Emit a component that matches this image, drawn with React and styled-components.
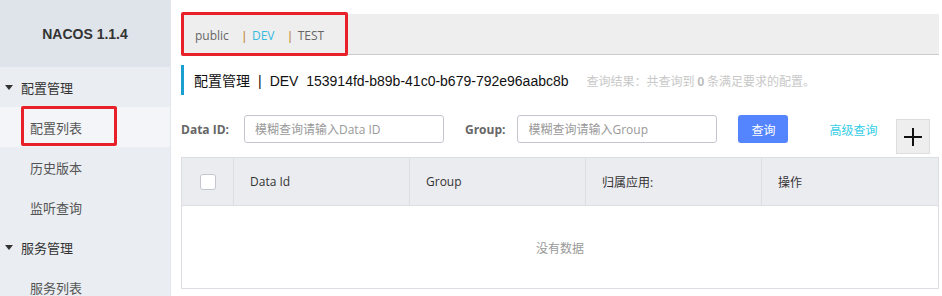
import React from "react";
import styled, { createGlobalStyle } from "styled-components";

const Global = createGlobalStyle`
  html, body { margin: 0; padding: 0; background: #fff; }
  body { font-family: "Liberation Sans", "Noto Sans CJK SC", sans-serif; font-size: 12px; color: #333; }
  * { box-sizing: border-box; }
`;

const Page = styled.div`
  display: flex;
  width: 942px;
  height: 296px;
  overflow: hidden;
`;

const Sidebar = styled.aside`
  width: 171px;
  flex: none;
  background: #eaedf1;
  border-right: 1px solid #e3e6eb;
`;

const Brand = styled.div`
  height: 67px;
  background: #dfe3ea;
  display: flex;
  align-items: center;
  justify-content: center;
  font-weight: bold;
  font-size: 14px;
  color: #333;
  font-family: "Liberation Sans", "Noto Sans CJK SC", sans-serif;
`;

const Menu = styled.ul`
  list-style: none;
  margin: 0;
  padding: 0;
`;

const MenuItem = styled.li`
  height: 40px;
  display: flex;
  align-items: center;
  padding-left: ${(p) => (p.$group ? 5 : 30)}px;
  background: ${(p) => (p.$active ? "#f4f5f8" : "transparent")};
  color: ${(p) => (p.$group ? "#333" : "#555")};
  font-size: 13px;
  font-family: "Noto Sans CJK SC", sans-serif;
  position: relative;
`;

const Caret = styled.span`
  width: 0;
  height: 0;
  border-left: 4px solid transparent;
  border-right: 4px solid transparent;
  border-top: 5px solid #333;
  margin-right: 8px;
`;

const Highlight = styled.span`
  position: absolute;
  left: 21px;
  top: -1px;
  width: 96px;
  height: 40px;
  border: 3px solid #e8202a;
  border-radius: 2px;
`;

const Main = styled.main`
  flex: 1;
  padding: 14px 3px 0 10px;
  display: flex;
  flex-direction: column;
`;

const TabBar = styled.div`
  height: 41px;
  background: #eeeeee;
  border-bottom: 1px solid #cccccc;
  display: flex;
  align-items: center;
  padding: 3px 0 0 14px;
  position: relative;
`;

const TabBox = styled.span`
  position: absolute;
  left: 0;
  top: -2px;
  width: 167px;
  height: 44px;
  border: 3px solid #e8202a;
  border-radius: 2px;
`;

const Tab = styled.span`
  font-size: 12px;
  color: ${(p) => (p.$active ? "#33bbe0" : "#666")};
  font-family: "Open Sans", "Noto Sans CJK SC", sans-serif;
`;

const Sep = styled.span`
  color: #c1862e;
  margin: 0 6px 0 14px;
  font-size: 12px;
`;

const TitleRow = styled.div`
  margin-top: 10px;
  height: 30px;
  display: flex;
  align-items: center;
  border-left: 3px solid #1a9fd0;
  padding-left: 10px;
`;

const Title = styled.span`
  font-size: 14px;
  color: #111;
  font-family: "Liberation Sans", "Noto Sans CJK SC", sans-serif;
  white-space: nowrap;
`;

const Pipe = styled.span`
  margin: 0 8px;
`;

const Summary = styled.span`
  margin-left: 18px;
  color: #c8c8c8;
  font-size: 12px;
  font-family: "Noto Sans CJK SC", sans-serif;
  white-space: nowrap;
  b { color: #bbb; }
`;

const FormRow = styled.div`
  margin-top: 20px;
  display: flex;
  align-items: flex-start;
  height: 42px;
`;

const Label = styled.label`
  font-weight: bold;
  color: #666;
  font-size: 12px;
  height: 28px;
  display: flex;
  align-items: center;
  font-family: "Open Sans", sans-serif;
  margin-right: ${(p) => p.$mr}px;
  margin-left: ${(p) => p.$ml || 0}px;
`;

const Input = styled.input`
  width: 200px;
  height: 28px;
  border: 1px solid #c4c6cf;
  border-radius: 3px;
  padding: 0 10px;
  font-size: 12px;
  font-family: "Open Sans", "Noto Sans CJK SC", sans-serif;
  outline: none;
  &::placeholder { color: #999; }
`;

const Button = styled.button`
  margin-left: 21px;
  width: 50px;
  height: 28px;
  border: none;
  border-radius: 3px;
  background: #5584ff;
  color: #fff;
  font-size: 12px;
  font-family: "Noto Sans CJK SC", sans-serif;
`;

const Link = styled.a`
  margin-left: 41px;
  height: 28px;
  display: flex;
  align-items: center;
  color: #33cde5;
  font-size: 12px;
  font-family: "Noto Sans CJK SC", sans-serif;
`;

const PlusBtn = styled.div`
  margin-left: 19px;
  margin-top: 4px;
  width: 34px;
  height: 35px;
  background: #eeeeee;
  border: 1px solid #dddddd;
  display: flex;
  align-items: center;
  justify-content: center;
`;

const Table = styled.div`
  width: 758px;
  border: 1px solid #dcdee3;
`;

const HeadRow = styled.div`
  display: grid;
  grid-template-columns: 51px 176px 176px 176px 1fr;
  height: 48px;
  background: #ebecf0;
  border-bottom: 1px solid #dcdee3;
`;

const HeadCell = styled.div`
  display: flex;
  align-items: center;
  justify-content: ${(p) => (p.$center ? "center" : "flex-start")};
  padding-left: ${(p) => (p.$center ? 0 : 16)}px;
  border-left: ${(p) => (p.$first ? "none" : "1px solid #dcdee3")};
  color: #333;
  font-size: 12px;
  font-family: "Open Sans", "Noto Sans CJK SC", sans-serif;
`;

const Check = styled.span`
  width: 16px;
  height: 16px;
  border: 1px solid #c4c6cf;
  border-radius: 3px;
  background: #fff;
`;

const Empty = styled.div`
  height: 82px;
  display: flex;
  align-items: center;
  justify-content: center;
  color: #999;
  font-size: 12px;
  font-family: "Noto Sans CJK SC", sans-serif;
`;

export default function App() {
  return (
    <>
      <Global />
      <Page>
        <Sidebar>
          <Brand>NACOS 1.1.4</Brand>
          <Menu>
            <MenuItem $group><Caret />配置管理</MenuItem>
            <MenuItem $active>配置列表<Highlight /></MenuItem>
            <MenuItem>历史版本</MenuItem>
            <MenuItem>监听查询</MenuItem>
            <MenuItem $group><Caret />服务管理</MenuItem>
            <MenuItem>服务列表</MenuItem>
          </Menu>
        </Sidebar>
        <Main>
          <TabBar>
            <TabBox />
            <Tab>public</Tab>
            <Sep>|</Sep>
            <Tab $active>DEV</Tab>
            <Sep>|</Sep>
            <Tab>TEST</Tab>
          </TabBar>
          <TitleRow>
            <Title>配置管理<Pipe>|</Pipe>DEV&nbsp;&nbsp;153914fd-b89b-41c0-b679-792e96aabc8b</Title>
            <Summary>查询结果：共查询到 <b>0</b> 条满足要求的配置。</Summary>
          </TitleRow>
          <FormRow>
            <Label $mr={15}>Data ID:</Label>
            <Input placeholder="模糊查询请输入Data ID" />
            <Label $ml={21} $mr={12}>Group:</Label>
            <Input placeholder="模糊查询请输入Group" />
            <Button>查询</Button>
            <Link>高级查询</Link>
            <PlusBtn>
              <svg width="20" height="20" viewBox="0 0 20 20">
                <path d="M10 1v18M1 10h18" stroke="#111" strokeWidth="2" />
              </svg>
            </PlusBtn>
          </FormRow>
          <Table>
            <HeadRow>
              <HeadCell $first $center><Check /></HeadCell>
              <HeadCell>Data Id</HeadCell>
              <HeadCell>Group</HeadCell>
              <HeadCell>归属应用:</HeadCell>
              <HeadCell>操作</HeadCell>
            </HeadRow>
            <Empty>没有数据</Empty>
          </Table>
        </Main>
      </Page>
    </>
  );
}
